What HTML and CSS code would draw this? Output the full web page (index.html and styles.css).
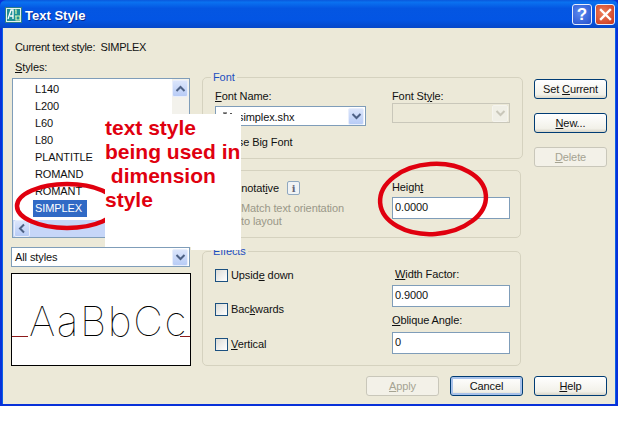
FILE: index.html
```html
<!DOCTYPE html>
<html lang="en">
<head>
<meta charset="utf-8">
<title>Text Style</title>
<link rel="stylesheet" href="styles.css">
</head>
<body>
<div class="window">
  <header class="titlebar">
    <svg class="app-icon" width="17" height="16" viewBox="0 0 17 16">
      <rect x="0.5" y="0.5" width="16" height="15" fill="#e8f4ee" stroke="#2f7f86"/>
      <rect x="2" y="2" width="13" height="12" fill="#1f8f96"/>
      <path d="M3 12 L6 3 H8 V12 M5 9 H8" fill="none" stroke="#fff" stroke-width="1.3"/>
      <path d="M10 3 H11 V7 M10 9 H15 V13 H11 V9" fill="none" stroke="#d8f5b0" stroke-width="1.2"/>
    </svg>
    <span class="title">Text Style</span>
    <span class="title-btn help">?</span>
    <span class="title-btn close">
      <svg width="13" height="13" viewBox="0 0 13 13"><path d="M2 2 L11 11 M11 2 L2 11" stroke="#fff" stroke-width="2.4" stroke-linecap="square"/></svg>
    </span>
  </header>

  <div class="client">
    <div class="columns">
      <section class="col-left">
        <p class="label current">Current text style:&nbsp; SIMPLEX</p>
        <p class="label styles-label"><u>S</u>tyles:</p>
        <div class="listbox">
          <ul class="items">
            <li>L140</li>
            <li>L200</li>
            <li>L60</li>
            <li>L80</li>
            <li>PLANTITLE</li>
            <li>ROMAND</li>
            <li>ROMANT</li>
            <li><span class="selected">SIMPLEX</span></li>
          </ul>
          <div class="vscroll">
            <span class="arrow-btn"><svg width="11" height="8" viewBox="0 0 11 8"><path d="M1.5 6 L5.5 2 L9.5 6" fill="none" stroke="#4d6185" stroke-width="2"/></svg></span>
          </div>
          <div class="hscroll">
            <span class="arrow-btn"><svg width="8" height="11" viewBox="0 0 8 11"><path d="M6 1.5 L2 5.5 L6 9.5" fill="none" stroke="#4d6185" stroke-width="2"/></svg></span>
          </div>
        </div>
        <div class="select all-styles">
          <span class="select-text">All styles</span>
          <span class="arrow-btn"><svg width="11" height="8" viewBox="0 0 11 8"><path d="M1.5 2 L5.5 6 L9.5 2" fill="none" stroke="#4d6185" stroke-width="2"/></svg></span>
        </div>
        <div class="preview">
          <span class="baseline lead"></span>
          <span class="preview-text">AaBbCc</span>
          <span class="baseline trail"></span>
        </div>
      </section>

      <section class="col-mid">
        <div class="group font-group">
          <span class="legend">Font</span>
          <div class="field name-field">
            <label class="label"><u>F</u>ont Name:</label>
            <div class="select font-select">
              <svg class="shx-icon" width="12" height="9" viewBox="0 0 12 9"><path d="M1 1 H5 M3 1 V8 M7 8 L9 1 L11 8" fill="none" stroke="#222" stroke-width="1"/></svg>
              <span class="select-text">simplex.shx</span>
              <span class="arrow-btn"><svg width="11" height="8" viewBox="0 0 11 8"><path d="M1.5 2 L5.5 6 L9.5 2" fill="none" stroke="#4d6185" stroke-width="2"/></svg></span>
            </div>
            <label class="label big-font">Use Big Font</label>
          </div>
          <div class="field">
            <label class="label">Font St<u>y</u>le:</label>
            <div class="select disabled-select">
              <span class="select-text"></span>
              <span class="arrow-btn off"><svg width="11" height="8" viewBox="0 0 11 8"><path d="M1.5 2 L5.5 6 L9.5 2" fill="none" stroke="#c9c7ba" stroke-width="2"/></svg></span>
            </div>
          </div>
        </div>

        <div class="group size-group">
          <div class="field annot-field">
            <div class="annot-row">
              <span class="label">Annotat<u>i</u>ve</span>
              <span class="info">i</span>
            </div>
            <p class="label grey match">Match text orientation<br>to layout</p>
          </div>
          <div class="field">
            <label class="label">Heigh<u>t</u></label>
            <div class="input height-input">0.0000</div>
          </div>
        </div>

        <div class="group effects-group">
          <span class="legend">Effects</span>
          <div class="checks">
            <label class="check first"><span class="box"></span><span class="label">Upsid<u>e</u> down</span></label>
            <label class="check second"><span class="box"></span><span class="label">Bac<u>k</u>wards</span></label>
            <label class="check third"><span class="box"></span><span class="label"><u>V</u>ertical</span></label>
          </div>
          <div class="field">
            <label class="label indent"><u>W</u>idth Factor:</label>
            <div class="input">0.9000</div>
            <label class="label oblique"><u>O</u>blique Angle:</label>
            <div class="input">0</div>
          </div>
        </div>
      </section>

      <section class="col-right">
        <button class="btn">Set <u>C</u>urrent</button>
        <button class="btn"><u>N</u>ew...</button>
        <button class="btn disabled"><u>D</u>elete</button>
      </section>
    </div>

    <footer class="footer">
      <button class="btn disabled"><u>A</u>pply</button>
      <button class="btn default">Cancel</button>
      <button class="btn"><u>H</u>elp</button>
    </footer>
  </div>

  <svg class="ellipses" width="618" height="406" viewBox="0 0 618 406">
    <ellipse cx="67" cy="206" rx="50" ry="22" fill="none" stroke="#e0000f" stroke-width="4.5"/>
  </svg>
  <div class="note">text style<br>being used in<br>&nbsp;dimension<br>style</div>
  <svg class="ellipses" width="618" height="406" viewBox="0 0 618 406">
    <ellipse cx="433" cy="199" rx="53" ry="35" transform="rotate(-4 433 199)" fill="none" stroke="#e0000f" stroke-width="4.5"/>
  </svg>
</div>
</body>
</html>
```

FILE: styles.css
```css
* { box-sizing: border-box; }
html, body { margin: 0; padding: 0; background: #fff; }
body { width: 620px; height: 440px; font-family: "Liberation Sans", Arial, sans-serif; font-size: 11px; letter-spacing: -0.1px; color: #111; }
p { margin: 0; }
u { text-underline-offset: 1px; }

.window { position: relative; width: 618px; height: 406px; display: flex; flex-direction: column; background: #0831d9; }

.titlebar {
  height: 28px; display: flex; align-items: center; padding: 1px 3px 0 5px; flex: none;
  background: linear-gradient(#0a58dc 0, #0a72f0 8%, #0456e2 30%, #0355e4 70%, #0647c8 100%);
  border-radius: 6px 6px 0 0;
}
.app-icon { flex: none; }
.title { margin-left: 3px; padding-top: 2px; flex: 1; color: #fff; font-weight: bold; font-size: 13px; letter-spacing: 0; text-shadow: 1px 1px 0 #0a2a90; }
.title-btn { width: 20px; height: 21px; display: flex; align-items: center; justify-content: center; border: 1px solid #e8eefc; border-radius: 3px; color: #fff; font-weight: bold; font-size: 17px; }
.help { background: radial-gradient(circle at 40% 40%, #5c8af0, #2450cc); margin-right: 3px; }
.close { background: radial-gradient(circle at 40% 40%, #ee7f5c, #c8341a); }

.client {
  flex: 1; display: flex; flex-direction: column; background: #ece9d8;
  margin: 0 3px 2px 3px; padding: 0 8px 8px 8px;
  box-shadow: -1px 0 0 #0a5fe8, 1px 0 0 #0a5fe8;
}
.columns { display: flex; gap: 11px; flex: 1; }
.col-left { width: 180px; flex: none; display: flex; flex-direction: column; padding-top: 12px; }
.col-mid { width: 321px; flex: none; display: flex; flex-direction: column; padding-top: 49px; }
.col-right { width: 73px; flex: none; display: flex; flex-direction: column; gap: 14px; padding-top: 51px; }

.label { line-height: 14px; white-space: nowrap; display: block; }
.current { margin-left: 4px; letter-spacing: -0.32px; }
.styles-label { margin: 6px 0 4px 4px; }

.listbox { position: relative; width: 178px; height: 160px; margin-left: 1px; background: #fff; border: 1px solid #7f9db9; }
.items { list-style: none; margin: 0; padding: 2px 0 0 22px; }
.items li { height: 17px; line-height: 17px; }
.selected { display: inline-block; width: 54px; padding-left: 2px; margin-left: -2px; background: #316ac5; color: #fff; }
.vscroll { position: absolute; top: 0; right: 0; bottom: 0; width: 17px; padding: 1px 0; background: #f3f2ec; }
.hscroll { position: absolute; left: 0; right: 17px; bottom: 0; height: 17px; padding-left: 1px; background: #c6d6f8; }
.arrow-btn { width: 16px; height: 17px; display: flex; align-items: center; justify-content: center; flex: none; background: linear-gradient(#dbe5fb, #b8ccf6); border: 1px solid #e8eefc; border-radius: 2px; }
.arrow-btn.off { background: #f0efe6; border-color: #f5f4ee; }

.select { display: flex; align-items: center; height: 20px; background: #fff; border: 1px solid #7f9db9; padding: 0 1px; }
.select-text { flex: 1; padding-left: 2px; }
.all-styles { margin-top: 9px; width: 179px; }
.disabled-select { width: 118px; background: #ece9d8; border-color: #c9c7ba; }

.preview { height: 93px; width: 180px; margin-top: 6px; background: #fff; border: 1px solid #000; display: flex; align-items: flex-end; padding-bottom: 28px; overflow: hidden; }
.baseline { height: 1px; background: #8c1a1a; }
.baseline.lead { width: 16px; flex: none; }
.baseline.trail { flex: 1; margin-left: -8px; }
.preview-text { font-family: "Inter", "Liberation Sans", sans-serif; font-weight: 100; font-size: 41px; line-height: 1px; letter-spacing: 1.6px; margin-bottom: 15px; height: 1px; color: #000; padding-left: 1px; flex: none; }

.group { position: relative; border: 1px solid #d5d2bf; border-radius: 5px; }
.legend { position: absolute; top: -8px; left: 8px; line-height: 14px; padding: 0 2px; background: #ece9d8; color: #1c4fc0; }

.font-group { height: 82px; display: flex; padding: 11px 0 0 12px; }
.name-field { width: 177px; }
.font-select { width: 151px; margin-top: 3px; }
.shx-icon { margin-left: 5px; flex: none; }
.font-select .select-text { padding-left: 4px; padding-top: 2px; }
.big-font { margin: 9px 0 0 15px; }

.size-group { height: 68px; width: 319px; margin-top: 11px; display: flex; padding: 9px 0 0 12px; }
.annot-field { width: 177px; }
.annot-row { display: flex; align-items: center; gap: 8px; padding-left: 13px; height: 16px; }
.info { width: 13px; height: 14px; display: flex; align-items: center; justify-content: center; font-family: "DejaVu Serif", serif; font-weight: bold; font-size: 10px; color: #667; background: #f0f3f4; border: 1px solid #8fa8c0; border-radius: 2px; }
.grey { color: #9a9888; }
.match { margin: 6px 0 0 26px; line-height: 13px; }
.input { width: 118px; height: 22px; background: #fff; border: 1px solid #7f9db9; padding: 0 2px; line-height: 19px; }
.height-input { margin-top: 3px; }

.effects-group { height: 115px; width: 319px; margin-top: 13px; display: flex; padding-left: 12px; }
.checks { width: 177px; display: flex; flex-direction: column; }
.check { display: flex; align-items: center; gap: 3px; height: 14px; }
.check.first { margin-top: 16px; }
.check.second { margin-top: 20px; }
.check.third { margin-top: 21px; }
.box { width: 13px; height: 13px; border: 1px solid #1c5180; background: linear-gradient(135deg, #dcdcd7, #fff); }
.effects-group .field { padding-top: 15px; }
.indent { margin-left: 3px; }
.effects-group .input { margin-top: 4px; }
.oblique { margin-top: 6px; }
.effects-group .oblique + .input { margin-top: 5px; }

.footer { display: flex; justify-content: flex-end; gap: 11px; height: 20px; margin-top: 10px; flex: none; }
.btn {
  width: 73px; height: 20px; padding: 0; font: inherit; letter-spacing: inherit; color: #111; white-space: nowrap;
  background: linear-gradient(#fff, #f2f1e9 80%, #d8d5c8);
  border: 1px solid #003c74; border-radius: 3px;
}
.btn.disabled { color: #a5a392; border-color: #c9c7ba; background: #f3f1e8; }
.btn.default { box-shadow: inset 0 0 0 2px #a9c2ea; }

.ellipses { position: absolute; left: 0; top: 0; pointer-events: none; }
.note {
  position: absolute; left: 105px; top: 114px; width: 136px; height: 133px; background: #fff;
  padding-top: 2px; color: #e0000f; font-weight: bold; font-size: 21px; letter-spacing: 0; line-height: 24px; white-space: nowrap;
}
.note::after { content: ""; position: absolute; left: 86px; right: 0; top: 133px; height: 3px; background: #fff; }
```
